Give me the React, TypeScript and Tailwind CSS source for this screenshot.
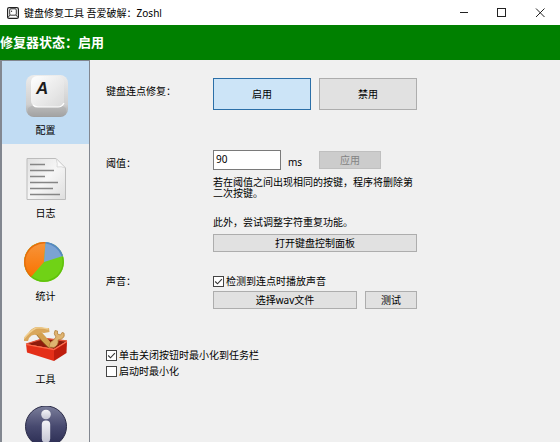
import React, { useState } from 'react';

const KeyIcon: React.FC = () => (
  <svg viewBox="0 0 44 44" className="w-11 h-11">
    <defs>
      <linearGradient id="keyBase" x1="0" y1="0" x2="0" y2="1">
        <stop offset="0" stopColor="#ececec" />
        <stop offset="0.7" stopColor="#cfcfcf" />
        <stop offset="1" stopColor="#9c9c9c" />
      </linearGradient>
      <linearGradient id="keyTop" x1="0" y1="0" x2="1" y2="1">
        <stop offset="0" stopColor="#ffffff" />
        <stop offset="1" stopColor="#d9d9d9" />
      </linearGradient>
    </defs>
    <rect x="2" y="1" width="42" height="42" rx="8" fill="url(#keyBase)" />
    <path d="M4 34 L9 31 H37 L42 34 Q43 42 36 42.500 H10 Q3 42 4 34Z" fill="#a9a9a9" opacity="0.45" />
    <rect x="7" y="2" width="33" height="31" rx="6" fill="url(#keyTop)" />
    <path d="M9 31 Q11 33 14 33 H34 Q38 33 40 29" fill="none" stroke="#fff" strokeWidth="1.200" />
    <text x="12" y="20" fontFamily="'Liberation Sans', sans-serif" fontSize="17" fontWeight="700" fontStyle="italic" fill="#1c1c1c">A</text>
  </svg>
);

const LogIcon: React.FC = () => (
  <svg viewBox="0 0 44 44" className="w-11 h-11">
    <defs>
      <linearGradient id="paper" x1="0" y1="0" x2="1" y2="1">
        <stop offset="0" stopColor="#e0e0e0" />
        <stop offset="0.5" stopColor="#f6f6f6" />
        <stop offset="1" stopColor="#dedede" />
      </linearGradient>
    </defs>
    <path d="M3 1.500 H32 L41.500 11 V42.500 H3Z" fill="url(#paper)" stroke="#bcbcbc" />
    <path d="M32 1.500 Q34 7 33 10 Q37 9 41.500 11Z" fill="#fafafa" stroke="#cfcfcf" strokeWidth="0.700" />
    <path d="M6 7.500 H21 M6 13.500 H30 M6 19.500 H21 M6 25.500 H34 M6 31.500 H29 M6 37.500 H36" stroke="#858585" strokeWidth="1.300" />
  </svg>
);

const PieIcon: React.FC = () => (
  <svg viewBox="0 0 44 44" className="w-11 h-11">
    <defs>
      <linearGradient id="pieOrange" x1="0" y1="0" x2="0" y2="1">
        <stop offset="0" stopColor="#f7953c" />
        <stop offset="1" stopColor="#f97300" />
      </linearGradient>
    </defs>
    <circle cx="20" cy="22" r="20" fill="#70d216" />
    <path d="M20 22 L21.500 2 A20 20 0 0 0 7 37Z" fill="url(#pieOrange)" />
    <path d="M20 22 L21.500 2 A20 20 0 0 1 39 16Z" fill="#7ba3d4" />
    <path d="M21.500 2.800 A19 19 0 0 1 38.200 16" fill="none" stroke="#5688c0" strokeWidth="1.500" />
    <path d="M21.500 2.800 A19.200 19.200 0 0 0 7.500 36.500" fill="none" stroke="#e76b0c" strokeWidth="1.300" />
    <path d="M7.500 36.500 A19.200 19.200 0 0 0 38.500 17" fill="none" stroke="#5fc00d" strokeWidth="1.300" />
  </svg>
);

const ToolboxIcon: React.FC = () => (
  <svg viewBox="0 0 44 44" className="w-11 h-11">
    <path d="M2 21 L20 15 L43 18 L30 26Z" fill="#8e1b0c" />
    <path d="M2 21 L20 15.300 L43 18" fill="none" stroke="#e2553a" strokeWidth="1.300" />
    <path d="M12 11 L17 8.500 L30 23 L25 25 Q19 20 12 11Z" fill="#d3a04f" />
    <path d="M12 11 Q19 20 25 25" fill="none" stroke="#8d5f20" strokeWidth="0.800" />
    <path d="M-1 18 Q-0.500 14 4 11 Q6 6 12 4 Q17 3.500 20 5 L25 5 L25.500 9 L20 10 L17 9.500 L12 12 Q8 11 5 15 L4 18Z" fill="#d9a75c" />
    <path d="M0 15.500 Q6 8 12 5 Q18 4.500 24.500 6" fill="none" stroke="#f0cf91" strokeWidth="1.400" />
    <path d="M25 24 Q25 19 29 17.500 L32 14 Q29 11 31 7.500 L33.500 8 L33.500 11 L36.500 12 L38 9.500 L40 10 Q41.500 14 37.500 16 L34 17 Q35 22 30 24.500Z" fill="#dfb471" stroke="#ad7a34" strokeWidth="0.700" />
    <path d="M2 21 L30 26 V38 L3 29.500Z" fill="#e42f18" />
    <path d="M30 26 L43 18.500 L42.500 30 L30 38Z" fill="#be1d0d" />
    <path d="M2 21.500 L30 26.500 L43 18.500" fill="none" stroke="#ff6a48" strokeWidth="1.200" />
  </svg>
);

const InfoIcon: React.FC = () => (
  <svg viewBox="0 0 44 44" className="w-11 h-11">
    <defs>
      <linearGradient id="infoBg" x1="0" y1="0" x2="0" y2="1">
        <stop offset="0" stopColor="#7b7e9b" />
        <stop offset="0.5" stopColor="#47496f" />
        <stop offset="1" stopColor="#282a50" />
      </linearGradient>
      <linearGradient id="infoMark" x1="0" y1="0" x2="0" y2="1">
        <stop offset="0" stopColor="#f4f4f8" />
        <stop offset="1" stopColor="#c5c6d4" />
      </linearGradient>
    </defs>
    <circle cx="22" cy="20.500" r="20.500" fill="url(#infoBg)" stroke="#2a2b47" />
    <circle cx="22" cy="8.500" r="4.800" fill="url(#infoMark)" />
    <rect x="17.800" y="14.500" width="8.400" height="22" rx="4" fill="url(#infoMark)" />
  </svg>
);

const navItems = [
  { id: 'config', label: '配置', icon: KeyIcon },
  { id: 'log', label: '日志', icon: LogIcon },
  { id: 'stats', label: '统计', icon: PieIcon },
  { id: 'tools', label: '工具', icon: ToolboxIcon },
  { id: 'about', label: '', icon: InfoIcon },
];

const TitleBar: React.FC = () => (
  <div className="flex items-center h-[25px] shrink-0 pl-[7px] pr-px bg-white">
    <svg viewBox="0 0 12 12" className="w-3 h-3 mr-[5px]" fill="none" stroke="#222">
      <rect x="0.600" y="0.600" width="10.800" height="10.800" rx="1.500" strokeWidth="1.200" />
      <rect x="2.700" y="1.800" width="6.600" height="6.400" rx="1.200" strokeWidth="0.900" />
      <path d="M4.600 3.600 V5 M1 10.500 L3 8 M11 10.500 L9 8" strokeWidth="0.900" />
    </svg>
    <h1 className="flex-1 truncate text-[10px] leading-4">键盘修复工具 吾爱破解：Zoshl</h1>
    <button aria-label="最小化" className="flex justify-center items-center w-[38px] h-full">
      <svg viewBox="0 0 10 10" className="w-2.5 h-2.5" stroke="#222"><path d="M1 4.500 H9" /></svg>
    </button>
    <button aria-label="最大化" className="flex justify-center items-center w-[38px] h-full">
      <svg viewBox="0 0 10 10" className="w-2.5 h-2.5" stroke="#222" fill="none"><rect x="0.500" y="0.500" width="8" height="8" /></svg>
    </button>
    <button aria-label="关闭" className="flex justify-center items-center w-[38px] h-full">
      <svg viewBox="0 0 10 10" className="w-2.5 h-2.5" stroke="#222"><path d="M1 0.500 L9.500 9 M9.500 0.500 L1 9" /></svg>
    </button>
  </div>
);

const Tick: React.FC<{ label: string; defaultChecked?: boolean }> = ({ label, defaultChecked }) => (
  <label className="flex items-center gap-0.5 h-3 leading-3 whitespace-nowrap">
    <span className="relative w-[11px] h-[11px]">
      <input
        type="checkbox"
        defaultChecked={defaultChecked}
        className="peer block w-full h-full appearance-none bg-white border border-[#444]"
      />
      <svg viewBox="0 0 11 11" className="absolute inset-0 hidden peer-checked:block pointer-events-none" fill="none" stroke="#333">
        <path d="M2.200 5.500 L4.500 7.800 L8.900 3.200" strokeWidth="1.100" />
      </svg>
    </span>
    {label}
  </label>
);

const greyButton = 'h-[18px] bg-[#e1e1e1] border border-[#adadad] leading-4 whitespace-nowrap';

export const App: React.FC = () => {
  const [tab, setTab] = useState('config');
  const [enabled, setEnabled] = useState(true);

  const big = 'h-8 flex-1 border leading-4';
  const on = 'bg-[#cce4f7] border-[#2b6fa8]';
  const off = 'bg-[#e1e1e1] border-[#adadad]';

  return (
    <div lang="zh-CN" className="h-screen flex flex-col overflow-hidden bg-[#f0f0f0] text-black text-[10px] font-['Noto_Sans','Noto_Sans_CJK_SC',sans-serif]">
      <TitleBar />
      <header className="flex items-center h-[35px] shrink-0 bg-[#008000] text-white text-[13px] font-bold">
        修复器状态：启用
      </header>

      <div className="flex flex-1 min-h-0">
        {/* Sidebar */}
        <nav className="w-[90px] shrink-0 overflow-hidden border-t border-l-2 border-r border-[#828790]">
          {navItems.map(({ id, label, icon: Icon }) => (
            <button
              key={id}
              onClick={() => setTab(id)}
              aria-label={label || '关于'}
              className={`flex flex-col items-center w-full h-[83px] pt-[13px] ${tab === id ? 'bg-[#c1dcf3]' : ''}`}
            >
              <Icon />
              <span className="mt-1 leading-4">{label}</span>
            </button>
          ))}
        </nav>

        {/* Settings */}
        <main className="flex-1 pt-[18px] px-4 leading-3">
          <div className="grid grid-cols-[107px_minmax(0,204px)]">
            <span className="pt-[7px]">键盘连点修复：</span>
            <div className="flex gap-2">
              <button onClick={() => setEnabled(true)} className={`${big} ${enabled ? on : off}`}>启用</button>
              <button onClick={() => setEnabled(false)} className={`${big} ${enabled ? off : on}`}>禁用</button>
            </div>

            <label htmlFor="threshold" className="mt-10 pt-[7px]">阈值：</label>
            <div className="mt-10">
              <div className="flex items-center">
                <input
                  id="threshold"
                  type="text"
                  defaultValue="90"
                  className="w-[68px] h-5 px-0.5 pb-0.5 bg-white border border-[#7a7a7a]"
                />
                <span className="ml-[7px] mt-1 flex-1">ms</span>
                <button disabled className="w-[62px] h-[18px] mr-9 bg-[#cccccc] border border-[#bfbfbf] text-[#838383] leading-4">
                  应用
                </button>
              </div>
              <p className="mt-[7px] leading-[11px]">若在阈值之间出现相同的按键，程序将删除第二次按键。</p>
              <p className="mt-[17px]">此外，尝试调整字符重复功能。</p>
              <button className={`${greyButton} w-full mt-1.5`}>打开键盘控制面板</button>
            </div>

            <span className="mt-[23px]">声音：</span>
            <div className="mt-[23px]">
              <Tick label="检测到连点时播放声音" defaultChecked />
              <div className="flex gap-2 mt-1">
                <button className={`${greyButton} flex-1`}>选择wav文件</button>
                <button className={`${greyButton} w-[52px]`}>测试</button>
              </div>
            </div>
          </div>

          <div className="flex flex-col items-start gap-1 mt-10">
            <Tick label="单击关闭按钮时最小化到任务栏" defaultChecked />
            <Tick label="启动时最小化" />
          </div>
        </main>
      </div>
    </div>
  );
};
export default App;
